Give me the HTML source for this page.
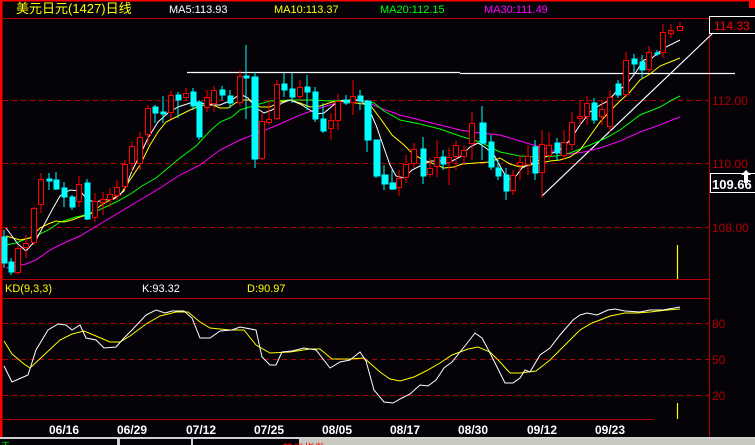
<!DOCTYPE html>
<html><head><meta charset="utf-8"><style>
html,body{margin:0;padding:0;background:#050308;overflow:hidden}
svg{display:block}
text{font-family:"Liberation Sans","Noto Sans CJK SC",sans-serif}
</style></head><body>
<svg width="755" height="445" viewBox="0 0 755 445" xmlns="http://www.w3.org/2000/svg">
<rect width="755" height="445" fill="#050308"/>
<rect x="0" y="0" width="755" height="1.5" fill="#ff0000"/>
<rect x="0" y="0" width="2.5" height="437" fill="#ff0000"/>
<rect x="749" y="0" width="6" height="8" fill="#ff0000"/>
<line x1="0" y1="18.5" x2="709" y2="18.5" stroke="#b00000"/>
<line x1="709.5" y1="18" x2="709.5" y2="437" stroke="#b00000"/>
<line x1="0" y1="279.5" x2="709" y2="279.5" stroke="#b00000"/>
<line x1="0" y1="298.5" x2="709" y2="298.5" stroke="#b00000"/>
<line x1="0" y1="419.5" x2="653" y2="419.5" stroke="#b00000"/>
<g stroke="#b00000" stroke-dasharray="5,4">
<line x1="3" y1="100.5" x2="709" y2="100.5"/>
<line x1="3" y1="163.5" x2="709" y2="163.5"/>
<line x1="3" y1="227.5" x2="709" y2="227.5"/>
<line x1="3" y1="323.5" x2="709" y2="323.5"/>
<line x1="3" y1="359.5" x2="709" y2="359.5"/>
<line x1="3" y1="395.5" x2="709" y2="395.5"/>
</g>
<text x="16" y="13" font-size="13" fill="#ffff00">美元日元(1427)日线</text>
<text x="169" y="13" font-size="11" fill="#ffffff">MA5:113.93</text>
<text x="274" y="13" font-size="11" fill="#ffff00">MA10:113.37</text>
<text x="380" y="13" font-size="11" fill="#00ff00">MA20:112.15</text>
<text x="484" y="13" font-size="11" fill="#ff00ff">MA30:111.49</text>
<rect x="709.5" y="16.5" width="46" height="17" fill="#050308" stroke="#ffffff"/>
<text x="714" y="30" font-size="12" fill="#ff0000">114.33</text>
<text x="712" y="105" font-size="12" fill="#b00000">112.00</text>
<text x="712" y="168" font-size="12" fill="#b00000">110.00</text>
<text x="712" y="232" font-size="12" fill="#b00000">108.00</text>
<rect x="710.5" y="173.5" width="45" height="19" fill="#050308" stroke="#ffffff"/>
<text x="712" y="189" font-size="13" font-weight="bold" fill="#ffffff">109.66</text>
<path d="M746 170 L751 175 L748 175 L748 183 L744 183 L744 175 L741 175 Z" fill="#ffffff"/>
<text x="712" y="328" font-size="12" fill="#b00000">80</text>
<text x="712" y="364" font-size="12" fill="#b00000">50</text>
<text x="712" y="400" font-size="12" fill="#b00000">20</text>
<line x1="677.5" y1="245" x2="677.5" y2="279" stroke="#ffff00" stroke-width="1.2"/>
<line x1="677.5" y1="403" x2="677.5" y2="419" stroke="#ffff00" stroke-width="1.2"/>
<g stroke="#ffffff" stroke-width="1.2" fill="none">
<line x1="187" y1="72.5" x2="460" y2="72.5"/>
<line x1="460" y1="73.5" x2="735" y2="73.5"/>
<line x1="542" y1="196" x2="713" y2="33"/>
</g>
<polyline fill="none" stroke="#ff00ff" points="6,268 16,266 26,264 36,260 50,250 64,243 80,236 100,224 120,212 140,200 160,188 180,175 200,165 220,150 240,140 260,132 280,124 300,115 320,108 340,102 360,99 380,108 400,115 420,120 440,125 460,130 480,133 500,135 520,141 540,147 560,153 570,154 584,152 600,148 620,141 640,132 660,125 672,120 680,117"/>
<polyline fill="none" stroke="#00ff00" points="6,245 16,243 26,239 36,236 50,229 60,222 76,217 90,214 110,205 120,200 132,193 142,186 156,178 168,168 180,158 196,146 210,131 220,122 232,117 240,110 256,105 270,101 290,100 310,100 330,101 350,100 364,101 374,103 384,111 400,120 420,124 440,129 460,136 480,142 500,152 520,156 540,157 556,156 570,153 590,145 606,138 620,130 640,115 660,107 672,100 680,96"/>
<polyline fill="none" stroke="#ffff00" points="6,236 20,240 30,238 40,228 48,224 56,221 64,222 72,220 80,217 90,214 100,206 110,200 120,195 130,180 140,165 150,145 158,132 166,122 176,117 190,110 200,106 210,104 220,108 228,108 240,100 250,100 260,107 270,107 280,102 290,100 300,103 310,107 320,106 332,102 344,101 356,103 370,105 380,118 392,135 404,145 414,155 424,160 434,164 444,168 454,167 462,164 476,163 490,162 500,158 510,164 520,167 530,165 540,163 550,161 560,160 570,157 580,150 590,136 600,122 610,111 620,101 630,92 640,80 650,74 660,66 670,62 680,58"/>
<polyline fill="none" stroke="#ffffff" points="6,228 18,244 26,251 36,240 44,225 52,210 60,196 70,190 80,191 88,200 95,202 104,200 114,199 124,191 132,171 140,155 148,138 158,122 168,113 178,107 190,103 200,103 210,105 220,105 232,100 240,94 248,98 256,108 264,113 272,110 282,103 290,100 300,104 310,110 316,114 324,113 336,103 344,100 352,101 360,100 368,107 376,125 384,148 390,165 396,176 404,178 412,170 420,166 430,161 440,161 452,161 460,157 470,147 478,143 486,148 494,155 500,166 508,180 516,176 522,168 530,164 540,160 550,154 560,150 570,140 580,125 590,112 600,105 608,101 616,92 626,85 636,72 644,60 652,58 664,48 680,40"/>
<g stroke="#00ffff" fill="#00ffff">
<line x1="4" y1="230" x2="4" y2="268"/><rect x="2" y="237" width="5" height="26"/>
<line x1="11" y1="258" x2="11" y2="275"/><rect x="9" y="262" width="5" height="10"/>
<line x1="49" y1="173" x2="49" y2="190"/><rect x="47" y="179" width="5" height="2"/>
<line x1="56" y1="172" x2="56" y2="190"/><rect x="54" y="180" width="5" height="9"/>
<line x1="64" y1="182" x2="64" y2="207"/><rect x="62" y="188" width="5" height="9"/>
<line x1="72" y1="195" x2="72" y2="210"/><rect x="70" y="197" width="5" height="10"/>
<line x1="87" y1="179" x2="87" y2="220"/><rect x="85" y="183" width="5" height="36"/>
<line x1="155" y1="105" x2="155" y2="123"/><rect x="153" y="107" width="5" height="6"/>
<line x1="163" y1="96" x2="163" y2="123"/><rect x="161" y="112" width="5" height="2"/>
<line x1="178" y1="92" x2="178" y2="118"/><rect x="176" y="95" width="5" height="5"/>
<line x1="193" y1="88" x2="193" y2="110"/><rect x="191" y="92" width="5" height="14"/>
<line x1="199" y1="100" x2="199" y2="140"/><rect x="197" y="102" width="5" height="35"/>
<line x1="222" y1="86" x2="222" y2="100"/><rect x="220" y="90" width="5" height="5"/>
<line x1="230" y1="90" x2="230" y2="108"/><rect x="228" y="96" width="5" height="7"/>
<line x1="246" y1="45" x2="246" y2="119"/><rect x="244" y="76" width="5" height="2"/>
<line x1="255" y1="72" x2="255" y2="168"/><rect x="252" y="77" width="6" height="82"/>
<line x1="284" y1="73" x2="284" y2="97"/><rect x="282" y="84" width="5" height="6"/>
<line x1="292" y1="73" x2="292" y2="103"/><rect x="290" y="89" width="5" height="8"/>
<line x1="307" y1="75" x2="307" y2="110"/><rect x="305" y="87" width="5" height="5"/>
<line x1="315" y1="87" x2="315" y2="122"/><rect x="313" y="92" width="5" height="27"/>
<line x1="323" y1="103" x2="323" y2="133"/><rect x="321" y="119" width="5" height="12"/>
<line x1="346" y1="95" x2="346" y2="105"/><rect x="344" y="100" width="5" height="3"/>
<line x1="360" y1="90" x2="360" y2="110"/><rect x="358" y="96" width="5" height="5"/>
<line x1="367" y1="100" x2="367" y2="152"/><rect x="365" y="101" width="6" height="39"/>
<line x1="376" y1="140" x2="376" y2="178"/><rect x="374" y="140" width="6" height="36"/>
<line x1="384" y1="165" x2="384" y2="190"/><rect x="382" y="175" width="6" height="9"/>
<line x1="392" y1="170" x2="392" y2="190"/><rect x="390" y="183" width="6" height="6"/>
<line x1="423" y1="137" x2="423" y2="184"/><rect x="421" y="149" width="5" height="27"/>
<line x1="443" y1="150" x2="443" y2="170"/><rect x="441" y="157" width="5" height="7"/>
<line x1="482" y1="106" x2="482" y2="160"/><rect x="480" y="123" width="6" height="20"/>
<line x1="491" y1="135" x2="491" y2="170"/><rect x="489" y="142" width="5" height="25"/>
<line x1="498" y1="160" x2="498" y2="180"/><rect x="496" y="168" width="5" height="8"/>
<line x1="506" y1="168" x2="506" y2="200"/><rect x="504" y="175" width="5" height="16"/>
<line x1="535" y1="140" x2="535" y2="180"/><rect x="533" y="147" width="5" height="26"/>
<line x1="557" y1="138" x2="557" y2="160"/><rect x="555" y="143" width="5" height="10"/>
<line x1="594" y1="98" x2="594" y2="124"/><rect x="592" y="103" width="5" height="17"/>
<line x1="618" y1="80" x2="618" y2="98"/><rect x="616" y="84" width="5" height="11"/>
<line x1="634" y1="54" x2="634" y2="73"/><rect x="632" y="59" width="5" height="5"/>
<line x1="642" y1="55" x2="642" y2="79"/><rect x="640" y="62" width="5" height="8"/>
<line x1="657" y1="50" x2="657" y2="56"/><rect x="655" y="53" width="5" height="1"/>
</g>
<g stroke="#ff0000" fill="#050308">
<line x1="18" y1="246" x2="18" y2="275"/><rect x="15.5" y="248.5" width="5" height="24"/>
<line x1="26" y1="235" x2="26" y2="258"/><rect x="23.5" y="243.5" width="5" height="4"/>
<line x1="34" y1="207" x2="34" y2="245"/><rect x="31.5" y="208.5" width="5" height="34"/>
<line x1="41" y1="173" x2="41" y2="213"/><rect x="38.5" y="179.5" width="5" height="25"/>
<line x1="79" y1="176" x2="79" y2="207"/><rect x="76.5" y="184.5" width="5" height="17"/>
<line x1="95" y1="193" x2="95" y2="222"/><rect x="92.5" y="201.5" width="5" height="16"/>
<line x1="103" y1="192" x2="103" y2="215"/><rect x="100.5" y="199.5" width="5" height="3"/>
<line x1="110" y1="188" x2="110" y2="207"/><rect x="107.5" y="194.5" width="5" height="5"/>
<line x1="117" y1="180" x2="117" y2="200"/><rect x="114.5" y="187.5" width="5" height="8"/>
<line x1="125" y1="160" x2="125" y2="190"/><rect x="122.5" y="164.5" width="5" height="22"/>
<line x1="132" y1="142" x2="132" y2="172"/><rect x="129.5" y="146.5" width="5" height="17"/>
<line x1="140" y1="132" x2="140" y2="170"/><rect x="137.5" y="137.5" width="5" height="26"/>
<line x1="148" y1="105" x2="148" y2="145"/><rect x="145.5" y="108.5" width="5" height="26"/>
<line x1="171" y1="91" x2="171" y2="119"/><rect x="168.5" y="95.5" width="5" height="17"/>
<line x1="186" y1="88" x2="186" y2="100"/><rect x="183.5" y="93.5" width="5" height="4"/>
<line x1="207" y1="90" x2="207" y2="112"/><rect x="204.5" y="97.5" width="5" height="10"/>
<line x1="214" y1="86" x2="214" y2="112"/><rect x="211.5" y="90.5" width="5" height="13"/>
<line x1="240" y1="70" x2="240" y2="106"/><rect x="237.5" y="76.5" width="5" height="26"/>
<line x1="262" y1="113" x2="262" y2="160"/><rect x="259.5" y="121.5" width="5" height="37"/>
<line x1="269" y1="100" x2="269" y2="125"/><rect x="266.5" y="119.5" width="5" height="3"/>
<line x1="277" y1="80" x2="277" y2="120"/><rect x="274.5" y="84.5" width="5" height="34"/>
<line x1="300" y1="80" x2="300" y2="100"/><rect x="297.5" y="87.5" width="5" height="9"/>
<line x1="331" y1="113" x2="331" y2="140"/><rect x="328.5" y="120.5" width="5" height="8"/>
<line x1="338" y1="94" x2="338" y2="130"/><rect x="335.5" y="101.5" width="5" height="19"/>
<line x1="353" y1="80" x2="353" y2="115"/><rect x="350.5" y="96.5" width="5" height="6"/>
<line x1="399" y1="170" x2="399" y2="196"/><rect x="396.5" y="178.5" width="5" height="9"/>
<line x1="406" y1="155" x2="406" y2="183"/><rect x="403.5" y="164.5" width="5" height="13"/>
<line x1="414" y1="143" x2="414" y2="168"/><rect x="411.5" y="149.5" width="5" height="14"/>
<line x1="430" y1="158" x2="430" y2="177"/><rect x="427.5" y="168.5" width="5" height="6"/>
<line x1="437" y1="140" x2="437" y2="177"/><rect x="434.5" y="157.5" width="5" height="9"/>
<line x1="449" y1="148" x2="449" y2="185"/><rect x="446.5" y="157.5" width="5" height="5"/>
<line x1="456" y1="141" x2="456" y2="170"/><rect x="453.5" y="145.5" width="5" height="11"/>
<line x1="464" y1="145" x2="464" y2="165"/><rect x="461.5" y="150.5" width="5" height="6"/>
<line x1="472" y1="112" x2="472" y2="160"/><rect x="469.5" y="123.5" width="5" height="20"/>
<line x1="513" y1="170" x2="513" y2="195"/><rect x="510.5" y="175.5" width="5" height="15"/>
<line x1="520" y1="155" x2="520" y2="180"/><rect x="517.5" y="162.5" width="5" height="3"/>
<line x1="528" y1="145" x2="528" y2="175"/><rect x="525.5" y="156.5" width="5" height="8"/>
<line x1="542" y1="130" x2="542" y2="198"/><rect x="539.5" y="144.5" width="5" height="28"/>
<line x1="549" y1="132" x2="549" y2="160"/><rect x="546.5" y="145.5" width="5" height="10"/>
<line x1="564" y1="130" x2="564" y2="160"/><rect x="561.5" y="142.5" width="5" height="13"/>
<line x1="572" y1="112" x2="572" y2="150"/><rect x="569.5" y="122.5" width="5" height="22"/>
<line x1="580" y1="100" x2="580" y2="125"/><rect x="577.5" y="116.5" width="5" height="2"/>
<line x1="587" y1="96" x2="587" y2="125"/><rect x="584.5" y="103.5" width="5" height="13"/>
<line x1="602" y1="100" x2="602" y2="125"/><rect x="599.5" y="109.5" width="5" height="7"/>
<line x1="610" y1="90" x2="610" y2="132"/><rect x="607.5" y="97.5" width="5" height="29"/>
<line x1="626" y1="52" x2="626" y2="97"/><rect x="623.5" y="60.5" width="5" height="34"/>
<line x1="649" y1="46" x2="649" y2="72"/><rect x="646.5" y="52.5" width="5" height="17"/>
<line x1="663" y1="24" x2="663" y2="58"/><rect x="660.5" y="32.5" width="5" height="20"/>
<line x1="671" y1="24" x2="671" y2="38"/><rect x="668.5" y="30.5" width="5" height="3"/>
<line x1="680" y1="22" x2="680" y2="31"/><rect x="677.5" y="26.5" width="5" height="4"/>
</g>
<text x="5" y="292" font-size="11" fill="#ffff00">KD(9,3,3)</text>
<text x="142" y="292" font-size="11" fill="#ffffff">K:93.32</text>
<text x="247" y="292" font-size="11" fill="#ffff00">D:90.97</text>
<polyline fill="none" stroke="#ffff00" points="4,341 12,354 24,364 30,368 44,355 60,340 72,334 84,331 96,336 110,342 120,342 130,336 146,324 160,316 176,312 188,312 200,322 210,328 230,330 244,330 256,345 270,353 290,352 310,349 320,349 332,359 350,359 364,358 380,372 390,379 400,381 414,377 426,371 440,363 452,355 468,349 478,347 490,352 500,362 510,373 520,373 536,371 550,360 565,345 580,330 592,323 600,320 610,316 625,313 637,313 650,312 667,310 680,309"/>
<polyline fill="none" stroke="#ffffff" points="4,366 12,382 28,375 36,350 48,330 58,324 66,325 72,330 80,325 86,338 96,340 104,348 116,347 124,338 132,330 146,315 156,310 165,313 172,311 184,311 192,318 200,338 210,338 220,331 232,330 240,327 256,330 262,357 270,365 276,365 282,352 292,351 304,348 316,350 330,368 340,362 350,360 360,352 366,361 374,390 384,402 393,403 402,398 410,394 420,385 428,386 436,380 444,368 452,362 460,352 468,342 475,333 482,338 490,353 500,373 505,383 513,383 520,378 525,370 530,372 540,355 550,348 560,335 573,320 580,315 587,313 597,315 608,310 615,309 625,311 640,312 650,310 663,310 680,307"/>
<g font-family="Liberation Mono, monospace" font-size="12" font-weight="bold" fill="#ffffff">
<text x="49" y="434">06/16</text><text x="117" y="434">06/29</text><text x="186" y="434">07/12</text><text x="254" y="434">07/25</text><text x="322" y="434">08/05</text><text x="390" y="434">08/17</text><text x="458" y="434">08/30</text><text x="527" y="434">09/12</text><text x="595" y="434">09/23</text>
</g>
<rect x="0" y="437" width="755" height="8" fill="#d0d0d0"/>
<rect x="0" y="439" width="117" height="6" fill="#050308"/>
<rect x="120" y="439" width="71" height="6" fill="#050308"/>
<rect x="193" y="439" width="106" height="6" fill="#050308"/>
<rect x="301" y="439" width="454" height="6" fill="#c8c8c0"/>
<text x="1" y="449" font-size="9" fill="#00ff00">天</text>
<text x="282" y="452" font-size="11" fill="#ff0000">美元指数</text>
</svg>
</body></html>
